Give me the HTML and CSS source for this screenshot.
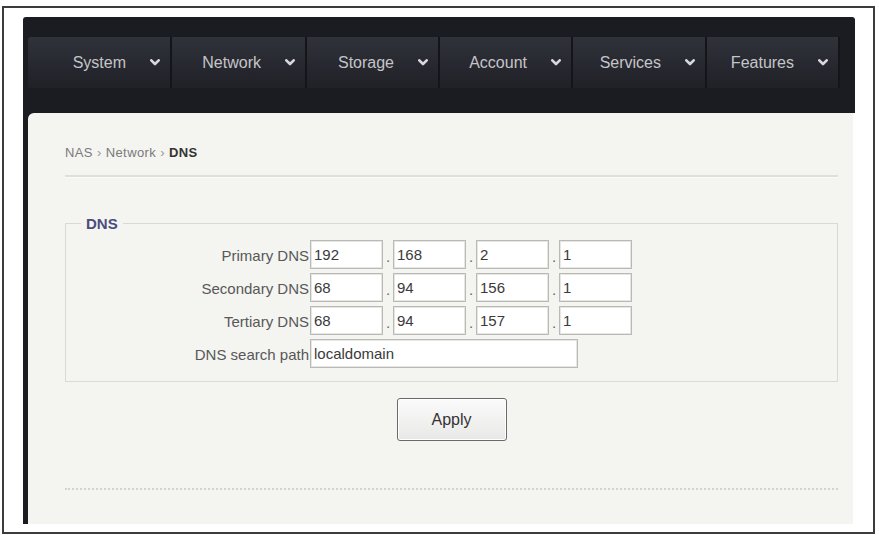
FILE: index.html
```html
<!DOCTYPE html>
<html>

	<head>
		<meta charset="utf-8">
		<title>NAS - DNS</title>
		<link rel="stylesheet" href="styles.css">
	</head>

	<body>
		<div class="frame">
			<div class="app">
				<ul class="nav">
					<li class="nav-item first">System<svg class="chev" viewBox="0 0 10 7"><polyline points="1.3,1.3 5,5 8.7,1.3"/></svg></li>
					<li class="nav-item w135">Network<svg class="chev" viewBox="0 0 10 7"><polyline points="1.3,1.3 5,5 8.7,1.3"/></svg></li>
					<li class="nav-item">Storage<svg class="chev" viewBox="0 0 10 7"><polyline points="1.3,1.3 5,5 8.7,1.3"/></svg></li>
					<li class="nav-item">Account<svg class="chev" viewBox="0 0 10 7"><polyline points="1.3,1.3 5,5 8.7,1.3"/></svg></li>
					<li class="nav-item w134">Services<svg class="chev" viewBox="0 0 10 7"><polyline points="1.3,1.3 5,5 8.7,1.3"/></svg></li>
					<li class="nav-item">Features<svg class="chev" viewBox="0 0 10 7"><polyline points="1.3,1.3 5,5 8.7,1.3"/></svg></li>
				</ul>
				<div class="stage">
					<div class="panel">
						<div class="crumbs">NAS <span class="sep">&rsaquo;</span> Network <span class="sep">&rsaquo;</span> <b>DNS</b></div>
						<div class="rule"></div>
						<fieldset class="box">
							<legend>DNS</legend>
							<div class="row">
								<label>Primary DNS</label>
								<input class="ip" type="text" value="192"><span class="dot">.</span>
								<input class="ip" type="text" value="168"><span class="dot">.</span>
								<input class="ip" type="text" value="2"><span class="dot">.</span>
								<input class="ip" type="text" value="1">
							</div>
							<div class="row">
								<label>Secondary DNS</label>
								<input class="ip" type="text" value="68"><span class="dot">.</span>
								<input class="ip" type="text" value="94"><span class="dot">.</span>
								<input class="ip" type="text" value="156"><span class="dot">.</span>
								<input class="ip" type="text" value="1">
							</div>
							<div class="row">
								<label>Tertiary DNS</label>
								<input class="ip" type="text" value="68"><span class="dot">.</span>
								<input class="ip" type="text" value="94"><span class="dot">.</span>
								<input class="ip" type="text" value="157"><span class="dot">.</span>
								<input class="ip" type="text" value="1">
							</div>
							<div class="row">
								<label>DNS search path</label>
								<input class="path" type="text" value="localdomain">
							</div>
						</fieldset>
						<div class="actions">
							<button class="apply" type="button">Apply</button>
						</div>
						<div class="dotted"></div>
					</div>
				</div>
			</div>
		</div>
	</body>

</html>
```

FILE: styles.css
```css
body {
	margin: 0px;
	background-color: #fff;
	font-family: "Liberation Sans", Arial, sans-serif;
}
.frame {
	margin: 6px 0px 0px 2px;
	width: 869px;
	height: 524px;
	border: solid 2px #3c3c3c;
	background-color: #fff;
}
.app {
	margin: 9px 18px 0px 19px;
	border-radius: 3px 3px 0px 0px;
	overflow: hidden;
}
.nav {
	display: flex;
	margin: 0px;
	padding: 20px 15px 25px 5px;
	list-style: none;
	background-color: #1b1c21;
}
.nav-item {
	display: flex;
	align-items: center;
	justify-content: flex-end;
	gap: 24px;
	box-sizing: border-box;
	width: 133px;
	height: 51px;
	padding-right: 10px;
	border-right: solid 2px #141519;
	background: linear-gradient(#30323a, #202127);
	color: #c4c5c8;
	font-size: 16px;
}
.nav-item.first {
	width: 144px;
	border-radius: 3px 0px 0px 0px;
}
.nav-item.w135 {
	width: 135px;
}
.nav-item.w134 {
	width: 134px;
}
.chev {
	width: 10px;
	height: 7px;
	fill: none;
	stroke: #d6d7da;
	stroke-width: 2.6;
	stroke-linecap: round;
	stroke-linejoin: round;
}
.stage {
	margin-right: 2px;
	padding-left: 5px;
	height: 411px;
	background-color: #1b1c21;
}
.panel {
	box-sizing: border-box;
	height: 100%;
	padding: 32px 15px 0px 37px;
	border-radius: 6px 0px 0px 0px;
	background-color: #f4f4f1;
}
.crumbs {
	height: 15px;
	line-height: 15px;
	font-size: 13px;
	letter-spacing: 0.4px;
	color: #7a7a7a;
}
.crumbs b {
	color: #333;
}
.crumbs .sep {
	color: #999;
}
.rule {
	margin-top: 15px;
	height: 2px;
	background-color: #dededa;
	border-bottom: solid 1px #fbfbfa;
}
.box {
	margin: 37px 0px 0px 0px;
	padding: 8px 0px 13px 0px;
	border: solid 1px #d9d9d5;
	display: flex;
	flex-direction: column;
	gap: 4px;
}
.box legend {
	margin-left: 15px;
	padding: 0px 5px;
	line-height: 17px;
	font-size: 15px;
	font-weight: bold;
	color: #4d4c7e;
}
.row {
	display: flex;
	align-items: stretch;
	height: 29px;
}
.row label {
	width: 243px;
	padding-right: 1px;
	text-align: right;
	line-height: 32px;
	font-size: 15px;
	color: #585858;
}
.row input {
	box-sizing: border-box;
	height: 29px;
	margin: 0px;
	padding: 0px 3px;
	border: solid 1px #b9b9b6;
	box-shadow: inset 0px 0px 0px 1px #e6e6e3;
	background-color: #fff;
	font-family: "Liberation Sans", Arial, sans-serif;
	font-size: 15px;
	color: #3a3a3a;
	outline: none;
}
.ip {
	width: 73px;
}
.path {
	width: 268px;
}
.dot {
	width: 10px;
	text-align: center;
	line-height: 34px;
	font-size: 15px;
	color: #666;
}
.actions {
	display: flex;
	justify-content: center;
	margin-top: 16px;
}
.apply {
	width: 110px;
	height: 43px;
	border: solid 1px #6a6a6a;
	border-radius: 3px;
	background: linear-gradient(#fbfbfb, #e8e8e6);
	box-shadow: inset 0px 0px 0px 1px #fff;
	font-family: "Liberation Sans", Arial, sans-serif;
	font-size: 16px;
	color: #333;
}
.dotted {
	margin-top: 47px;
	border-top: dotted 2px #d2d2cf;
}
```
